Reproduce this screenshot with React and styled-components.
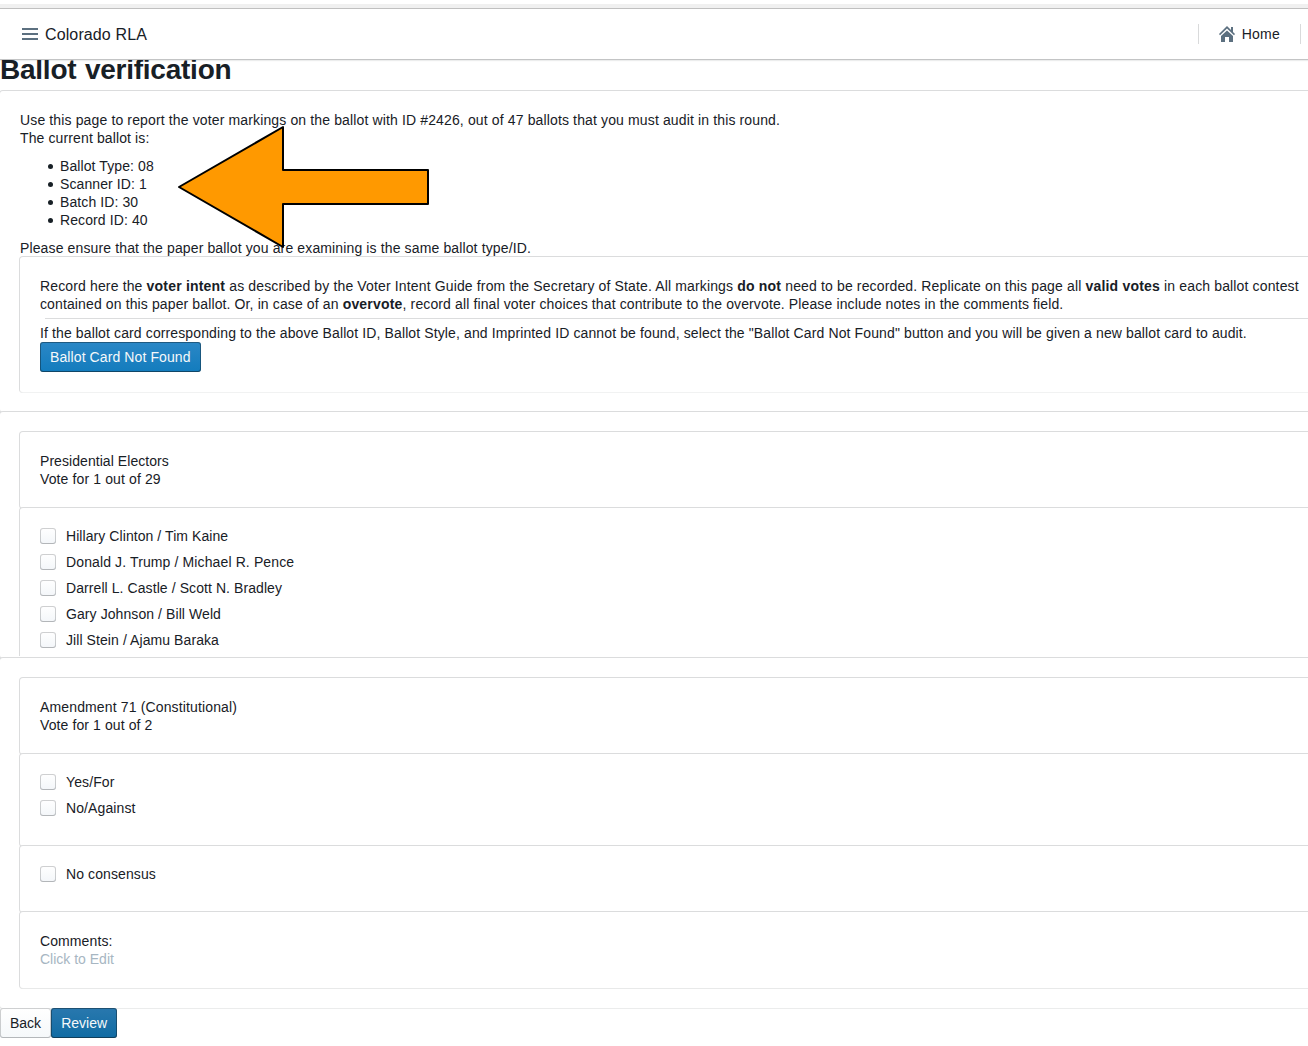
import React from "react";
import styled, { createGlobalStyle } from "styled-components";

const Global = createGlobalStyle`
  html, body { margin: 0; padding: 0; background: #fff; }
  body {
    overflow: hidden;
    color: #182026;
    font: 14px/18px "Liberation Sans", Arial, sans-serif;
    letter-spacing: 0.1px;
  }
  *, *::before, *::after { box-sizing: border-box; }
`;

const Page = styled.div`
  width: 1348px;
  height: 1046px;
  overflow: hidden;
`;

const TopStrip = styled.div`
  height: 9px;
  border-top: 4px solid #fff;
  border-bottom: 1px solid #c0c0c0;
  background: #f0f0f0;
`;

const Navbar = styled.header`
  position: relative;
  z-index: 1;
  display: flex;
  align-items: center;
  justify-content: space-between;
  height: 51px;
  padding: 0 47px 0 22px;
  border-bottom: 1px solid #c3c4c5;
  background: #fff;
  box-shadow: 0 1px 1px rgba(16, 22, 26, 0.08);
`;

const NavGroup = styled.div`
  display: flex;
  align-items: center;
`;

const NavIcon = styled.svg`
  width: 16px;
  height: 16px;
  margin-right: 7px;
  fill: #5c7080;
`;

const Brand = styled.span`
  padding-top: 1px;
  font-size: 16px;
  line-height: 19px;
  letter-spacing: 0.12px;
`;

const NavDivider = styled.span`
  width: 1px;
  height: 20px;
  background: #d9dadb;
`;

const HomeLink = styled.a`
  display: flex;
  align-items: center;
  padding: 0 20px;
  letter-spacing: 0.25px;
`;

const Title = styled.h1`
  margin: 0;
  height: 31px;
  font-size: 28px;
  line-height: 20px;
  font-weight: bold;
  letter-spacing: -0.24px;
  word-spacing: 1px;
`;

const Card = styled.section`
  height: ${(p) => (p.$height ? `${p.$height}px` : "auto")};
  padding: 20px;
  border-radius: ${(p) => (p.$clipped ? "3px 3px 0 0" : "3px")};
  background: #fff;
  box-shadow: 0 1px 0 0 ${(p) => p.$bottom || "#dbdcdd"}, 0 0 0 1px #dbdcdd;
`;

const Line = styled.div`
  letter-spacing: ${(p) => p.$track ?? 0.1}px;

  b {
    letter-spacing: 0.2px;
  }
`;

const Details = styled.ul`
  margin: 10px 0;
  padding-left: 28px;
  list-style: none;
`;

const Detail = styled.li`
  display: flex;
  align-items: center;

  &::before {
    content: "";
    width: 5.4px;
    height: 5.4px;
    margin: 0.5px 6.7px 0 -0.1px;
    border-radius: 50%;
    background: #182026;
  }
`;

const Divider = styled.div`
  margin: 5px 0 5px 5px;
  border-top: 1px solid #dbdcdd;
`;

const tones = {
  primary: "linear-gradient(#2b87c6, #137cbd)",
  dark: "linear-gradient(#2978ae, #106ba3)",
  plain: "linear-gradient(#fff, #f5f8fa)",
};

const Button = styled.button`
  display: inline-flex;
  align-items: center;
  justify-content: center;
  height: 30px;
  padding: 0 10px;
  border: 0;
  border-radius: 3px;
  font: inherit;
  letter-spacing: ${(p) => p.$track ?? 0}px;
  color: ${(p) => (p.$tone === "plain" ? "#182026" : "#f5f8fa")};
  background: ${(p) => tones[p.$tone]};
  box-shadow: ${(p) =>
    p.$tone === "plain"
      ? "inset 0 0 0 1px rgba(16,22,26,.2), inset 0 -1px 0 rgba(16,22,26,.1)"
      : "inset 0 0 0 1px rgba(16,22,26,.4), inset 0 -1px 0 rgba(16,22,26,.2)"};
`;

const Option = styled.label`
  display: flex;
  align-items: center;
  gap: 10px;
  height: 16px;
  margin-bottom: 10px;
`;

const Box = styled.span`
  width: 16px;
  height: 16px;
  border-radius: 3px;
  background: linear-gradient(#fff, #f3f6f9);
  box-shadow: inset 0 0 0 1px rgba(16, 22, 26, 0.2),
    inset 0 -1px 0 rgba(16, 22, 26, 0.1);
`;

const Placeholder = styled.div`
  color: #a7b6c2;
  letter-spacing: 0;
`;

const Actions = styled.footer`
  position: relative;
  display: flex;
`;

const Arrow = styled.svg`
  position: absolute;
  left: 176px;
  top: 124px;
  width: 256px;
  height: 126px;
  fill: #ff9900;
  stroke: #000;
  stroke-width: 2;
  stroke-linejoin: round;
`;

const Choice = ({ track, children }) => (
  <Option>
    <Box />
    <Line as="span" $track={track}>{children}</Line>
  </Option>
);

const candidates = [
  ["Hillary Clinton / Tim Kaine", 0.07],
  ["Donald J. Trump / Michael R. Pence", 0.12],
  ["Darrell L. Castle / Scott N. Bradley", 0.08],
  ["Gary Johnson / Bill Weld", 0.08],
  ["Jill Stein / Ajamu Baraka", 0.08],
];

export default function App() {
  return (
    <Page>
      <Global />
      <TopStrip />
      <Navbar>
        <NavGroup>
          <NavIcon viewBox="0 0 16 16">
            <path d="M0 2h16v2H0zM0 7h16v2H0zM0 12h16v2H0z" />
          </NavIcon>
          <Brand>Colorado RLA</Brand>
        </NavGroup>
        <NavGroup>
          <NavDivider />
          <HomeLink>
            <NavIcon viewBox="0 0 16 16">
              <path d="M2 10v6h4v-5h4v5h4v-6L8 4.4zM16 8l-2-2V1h-2v3L8 0 0 8l1 1.2L8 2.6l7 6.6z" />
            </NavIcon>
            Home
          </HomeLink>
          <NavDivider />
        </NavGroup>
      </Navbar>
      <Title>Ballot verification</Title>
      <Card>
        <Line $track={0.136}>
          Use this page to report the voter markings on the ballot with ID #2426, out of 47 ballots that you must audit in this round.
        </Line>
        <Line $track={0.12}>The current ballot is:</Line>
        <Details>
          <Detail>Ballot Type: 08</Detail>
          <Detail>Scanner ID: 1</Detail>
          <Detail>Batch ID: 30</Detail>
          <Detail>Record ID: 40</Detail>
        </Details>
        <Line $track={0.13}>Please ensure that the paper ballot you are examining is the same ballot type/ID.</Line>
        <Card $height={135} $bottom="#f1f2f2">
          <Line $track={0.142}>
            Record here the <b>voter intent</b> as described by the Voter Intent Guide from the Secretary of State. All markings <b>do not</b> need to be recorded. Replicate on this page all <b>valid votes</b> in each ballot contest
          </Line>
          <Line $track={0.122}>
            contained on this paper ballot. Or, in case of an <b>overvote</b>, record all final voter choices that contribute to the overvote. Please include notes in the comments field.
          </Line>
          <Divider />
          <Line $track={0.119}>
            If the ballot card corresponding to the above Ballot ID, Ballot Style, and Imprinted ID cannot be found, select the "Ballot Card Not Found" button and you will be given a new ballot card to audit.
          </Line>
          <Button $tone="primary" $track={0.1}>Ballot Card Not Found</Button>
        </Card>
      </Card>
      <Card $height={246}>
        <Card>
          <Line $track={0.06}>Presidential Electors</Line>
          <Line $track={0.12}>Vote for 1 out of 29</Line>
        </Card>
        <Card $height={147} $clipped $bottom="#fff">
          {candidates.map(([name, track]) => (
            <Choice key={name} track={track}>{name}</Choice>
          ))}
        </Card>
      </Card>
      <Card $bottom="#ebecec">
        <Card>
          <Line $track={0.14}>Amendment 71 (Constitutional)</Line>
          <Line>Vote for 1 out of 2</Line>
        </Card>
        <Card>
          <Choice>Yes/For</Choice>
          <Choice>No/Against</Choice>
        </Card>
        <Card>
          <Choice>No consensus</Choice>
        </Card>
        <Card $bottom="#e8e9e9">
          <Line>Comments:</Line>
          <Placeholder>Click to Edit</Placeholder>
        </Card>
      </Card>
      <Actions>
        <Button $tone="plain">Back</Button>
        <Button $tone="dark">Review</Button>
      </Actions>
      <Arrow viewBox="0 0 256 126">
        <path d="M3 63L107 3V46H252V80H107V123Z" />
      </Arrow>
    </Page>
  );
}
